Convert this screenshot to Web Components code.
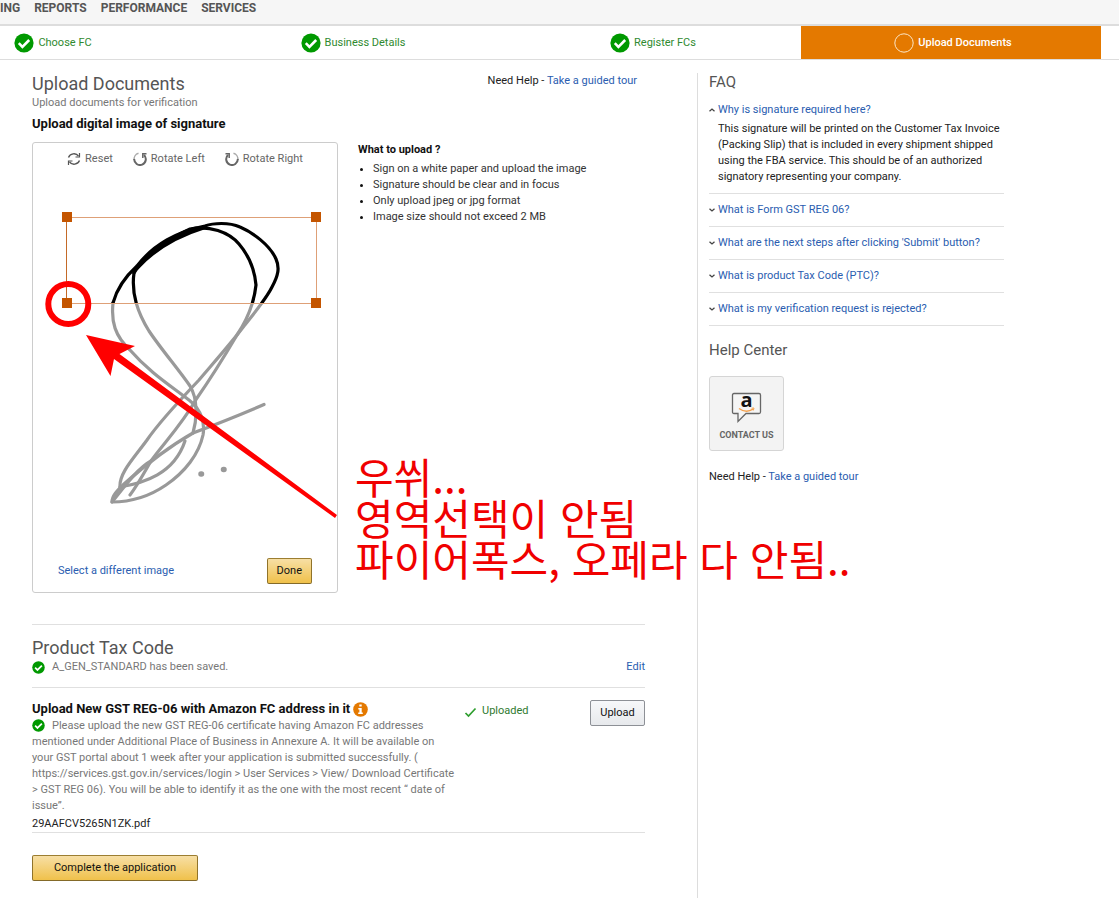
<!DOCTYPE html>
<html lang="en">
<head>
<meta charset="utf-8">
<title>Upload Documents</title>
<style>
body{margin:0;background:#fff;color:#222;font:11px/16px Roboto,"Liberation Sans",sans-serif;overflow-x:hidden}
</style>
</head>
<body>
<upload-page></upload-page>
<script>
const CHECK = size => `<svg width="${size}" height="${size}" viewBox="0 0 20 20" aria-hidden="true"><circle cx="10" cy="10" r="9.6" fill="#090"/><path d="M4.800 10.200l3.600 3.600L15.200 7" fill="none" stroke="#fff" stroke-width="2.600"/></svg>`;
const LINK = 'a{color:#2a5db0;text-decoration:none}a:hover{text-decoration:underline}';
const define = (name, html) => customElements.define(name, class extends HTMLElement {
  constructor() {
    super();
    const t = document.createElement('template');
    t.innerHTML = typeof html === 'function' ? html(this) : html;
    this.attachShadow({mode: 'open'}).append(t.content);
  }
});

define('site-nav', `<style>
:host{display:block;background:#f6f6f6;border-bottom:2px solid #ddd}
nav{display:flex;gap:14px;height:24px;line-height:16px;font-size:12px;font-weight:700}
a{color:#555;text-decoration:none}
</style><nav aria-label="Main"><a href="#">ING</a><a href="#">REPORTS</a><a href="#">PERFORMANCE</a><a href="#">SERVICES</a></nav>`);

define('step-item', el => `<style>
:host{display:flex;box-sizing:border-box;align-items:center;justify-content:center;gap:4px;height:33px;padding:1px 0 0 4px;color:#2f8a2f}
:host([current]){background:#e47900;color:#fff;font-weight:500}
svg{display:block}
</style>${el.hasAttribute('current')
  ? '<svg width="20" height="20" viewBox="0 0 20 20" aria-hidden="true"><circle cx="10" cy="10" r="9.2" fill="none" stroke="#fbe6c8"/></svg>'
  : CHECK(20)}<slot></slot>`);

define('step-bar', `<style>
:host{display:block;border-bottom:1px solid #ddd}
div{display:grid;grid-template-columns:repeat(4,1fr);margin:0 18px 0 -99px}
</style><div><step-item>Choose FC</step-item><step-item>Business Details</step-item><step-item>Register FCs</step-item><step-item current>Upload Documents</step-item></div>`);

define('guided-tour', `<style>:host{display:block}${LINK}</style>Need Help - <a href="#">Take a guided tour</a>`);

define('ui-button', `<style>
:host{display:inline-block}
button{display:block;width:100%;height:26px;padding:0 9px;border:1px solid #8d9096;border-radius:2px;background:linear-gradient(#f7f8fa,#e7e9ec);color:#111;font:11px/16px Roboto,"Liberation Sans",sans-serif;cursor:pointer}
:host([primary]) button{border-color:#9c7e31 #90732a #846a29;background:linear-gradient(#f7dfa5,#f0c14b)}
</style><button type="button"><slot></slot></button>`);

define('tool-button', `<style>
:host{display:block}
button{display:flex;align-items:center;gap:4px;padding:0;border:0;background:none;color:#666;font:inherit;cursor:pointer}
</style><button type="button"><slot name="icon"></slot><slot></slot></button>`);

const SIGNATURE = `
<path d="M113 303C117 288 126 276 137 266C153 245 178 231 205 226C213 223 229 222 240 227C252 232 270 245 276 259C280 268 278 276 272 287C266 299 256 311 244 326C232 342 216 360 199 380C179 401 160 421 147 440C134 458 119 473 120 487"/>
<path d="M134 273C144 256 168 239 190 229C209 225 229 232 239 244C251 258 255 274 256 285C254 304 247 320 237 335C224 357 211 378 197 398C181 426 163 444 151 461C144 473 137 486 130 495"/>
<path d="M134 273C131 294 139 315 149 331C161 349 179 370 190 386C198 399 197 419 193 433"/>
<path d="M113 303C111 322 115 336 130 350C149 372 171 386 189 400C202 410 205 424 203 435C199 454 185 472 166 485C150 496 130 502 112 502C112 495 119 489 124 484C142 468 165 449 193 433C217 424 242 414 264 404.500"/>
<path d="M120 487C144 483 174 474 185 441"/><path d="M112 502C124 487 138 468 151 461"/>`;

define('signature-cropper', `<style>
:host{display:flex;flex-direction:column;width:304px;border:1px solid #ccc;border-radius:3px;padding:8px 0 8px}
.tools{display:flex;justify-content:center;gap:20px}
.stage{display:block;width:100%;margin-top:9px}
.foot{display:flex;align-items:center;justify-content:space-between;margin-top:28px;padding:0 25px}
${LINK}
</style>
<div class="tools">
<tool-button><svg slot="icon" width="14" height="14" viewBox="0 0 14 14" fill="none" stroke="#555" stroke-width="1.400" aria-hidden="true"><path d="M1.500 5.500C3 1.300 9 .500 11.500 4.200M12.500 8.500C11 12.700 5 13.500 2.500 9.800"/><path d="M12.500 1v4h-4M1.500 13V9h4" stroke-width="1.200"/></svg>Reset</tool-button>
<tool-button><svg slot="icon" width="14" height="14" viewBox="0 0 14 14" fill="none" stroke="#666" stroke-width="2" aria-hidden="true"><path d="M5.500 1.300A6 6 0 0 0 1.200 8" stroke="#aaa" stroke-width="1.500"/><path d="M1.200 7A5.800 5.800 0 1 0 11 3"/><path d="M9.800 6V1.800H13.500" stroke-width="1.500"/></svg>Rotate Left</tool-button>
<tool-button><svg slot="icon" width="14" height="14" viewBox="0 0 14 14" fill="none" stroke="#666" stroke-width="2" aria-hidden="true"><path d="M8.500 1.300A6 6 0 0 1 12.800 8" stroke="#aaa" stroke-width="1.500"/><path d="M12.800 7A5.800 5.800 0 1 1 3 3"/><path d="M4.200 6V1.800H.500" stroke-width="1.500"/></svg>Rotate Right</tool-button>
</div>
<svg class="stage" viewBox="33 176 304 354" role="img" aria-label="Signature with crop area">
<defs><clipPath id="in"><path d="M67 217H316V303H67z"/></clipPath><clipPath id="out"><path d="M33 303H337V530H33z"/></clipPath></defs>
<g fill="none" stroke-width="3.200" stroke-linecap="round" stroke-linejoin="round">
<g stroke="#999" clip-path="url(#out)">${SIGNATURE}<path d="M201 474h.5M223.500 469.500h.5" stroke-width="5.500"/></g>
<g stroke="#000" clip-path="url(#in)">${SIGNATURE}<path d="M137 268C155 248 179 235 205 227" stroke-width="4"/></g>
</g>
<path d="M66.500 217.500H316.500V303.500H66.500z" fill="none" stroke="#dea077"/><path d="M66.500 217V303" stroke="#c46a28"/>
<path d="M62 212h10v10H62zM311 212h10v10h-10zM62 298h10v10H62zM311 298h10v10h-10z" fill="#c45500"/>
</svg>
<div class="foot"><a href="#">Select a different image</a><ui-button primary>Done</ui-button></div>`);

define('upload-hints', `<style>
:host{display:block}
h3{margin:0 0 3px;font-size:11px;line-height:16px;color:#111}
ul{margin:0;padding-left:15px;color:#333}
li::marker{color:#111}
</style><h3>What to upload ?</h3><ul><li>Sign on a white paper and upload the image</li><li>Signature should be clear and in focus</li><li>Only upload jpeg or jpg format</li><li>Image size should not exceed 2 MB</li></ul>`);

define('faq-item', el => `<style>
:host{display:block;border-bottom:1px solid #e0e0e0;padding:8px 0}
summary{display:flex;align-items:center;gap:3px;color:#2a5db0;cursor:pointer;list-style:none}
details[open] svg{transform:rotate(180deg)}
p{margin:3px 0 0 9px;color:#222}
</style><details ${el.hasAttribute('expanded') ? 'open' : ''}><summary><svg width="6" height="6" viewBox="0 0 6 6" aria-hidden="true"><path d="M.500 1.800L3 4L5.500 1.800" fill="none" stroke="#444" stroke-width="1.300"/></svg><slot name="question"></slot></summary><p><slot></slot></p></details>`);

define('help-aside', `<style>
:host{display:block;border-left:1px solid #ddd;padding:0 115px 0 11px}
h2{margin:0;font-size:15px;line-height:18px;font-weight:400;color:#555}
.faq{margin-top:3px}
.center{margin-top:15px}
.contact{display:flex;flex-direction:column;align-items:center;width:75px;height:75px;margin:17px 0 18px;padding:14px 0 0;border:1px solid #d5d5d5;border-radius:3px;background:#f3f3f3;color:#666;font:700 9px/16px Roboto,"Liberation Sans",sans-serif;cursor:pointer}
.contact svg{margin-bottom:4px;flex:none;overflow:visible}
</style>
<h2>FAQ</h2>
<div class="faq">
<faq-item expanded><span slot="question">Why is signature required here?</span>This signature will be printed on the Customer Tax Invoice (Packing Slip) that is included in every shipment shipped using the FBA service. This should be of an authorized signatory representing your company.</faq-item>
<faq-item><span slot="question">What is Form GST REG 06?</span></faq-item>
<faq-item><span slot="question">What are the next steps after clicking 'Submit' button?</span></faq-item>
<faq-item><span slot="question">What is product Tax Code (PTC)?</span></faq-item>
<faq-item><span slot="question">What is my verification request is rejected?</span></faq-item>
</div>
<h2 class="center">Help Center</h2>
<button class="contact" type="button"><svg width="30" height="32" viewBox="0 0 30 32" aria-hidden="true"><path d="M2 2.500H27Q28.500 2.500 28.500 4V21Q28.500 22.500 27 22.500H14L6 30.500V22.500H2Q.500 22.500 .500 21V4Q.500 2.500 2 2.500z" fill="#f5f5f5" stroke="#666" stroke-width="1.300"/><text x="14.500" y="16" text-anchor="middle" font-family="Open Sans" font-weight="700" font-size="20" fill="#111">a</text><path d="M7 17.500Q14 22.500 21 18.200" fill="none" stroke="#f3a04c" stroke-width="1.500"/><path d="M19.500 17.200l2.500-.2-.7 2.500" fill="none" stroke="#f3a04c"/></svg>CONTACT US</button>
<guided-tour></guided-tour>`);

define('tax-code', `<style>
:host{display:block;border-top:1px solid #e0e0e0;border-bottom:1px solid #e0e0e0;margin-top:31px;padding:12px 0}
h2{margin:0;font-size:18px;line-height:22px;font-weight:400;color:#555}
div{display:flex;align-items:center;gap:7px;color:#777}
a{margin-left:auto}
${LINK}
</style><h2>Product Tax Code</h2><div>${CHECK(13)}<span>A_GEN_STANDARD has been saved.</span><a href="#">Edit</a></div>`);

define('certificate-upload', `<style>
:host{display:grid;grid-template-columns:minmax(0,1fr) 126px 55px;align-items:start;border-bottom:1px solid #e0e0e0;padding-top:12px}
h3{display:flex;align-items:center;gap:3px;margin:0;font-size:13px;line-height:18px;color:#111}
p{margin:0;padding-right:8px;color:#777}
p svg{vertical-align:-3px;margin-right:7px}
.file{margin-top:2px;color:#222}
.state{display:flex;align-items:center;gap:5px;margin-top:3px;color:#2f7a2f}
</style>
<div><h3>Upload New GST REG-06 with Amazon FC address in it <svg width="15" height="15" viewBox="0 0 15 15" role="img" aria-label="Information"><circle cx="7.500" cy="7.500" r="7.300" fill="#e47900"/><path d="M6.300 2.500h2.400v2H6.300zM5.300 6h3.400v4.600h1.100v1.400H5.200v-1.400h1.200V7.400H5.300z" fill="#fff"/></svg></h3>
<p>${CHECK(13)}Please upload the new GST REG-06 certificate having Amazon FC addresses mentioned under Additional Place of Business in Annexure A. It will be available on your GST portal about 1 week after your application is submitted successfully. ( https://services.gst.gov.in/services/login &gt; User Services &gt; View/ Download Certificate &gt; GST REG 06). You will be able to identify it as the one with the most recent “ date of issue”.</p>
<div class="file">29AAFCV5265N1ZK.pdf</div></div>
<div class="state"><svg width="13" height="13" viewBox="0 0 13 13" aria-hidden="true"><path d="M1.500 8L4.500 11L11.500 3.500" fill="none" stroke="#2e9e2e" stroke-width="1.700"/></svg>Uploaded</div>
<ui-button>Upload</ui-button>`);

define('red-note', `<style>
:host{position:absolute;left:0;top:0;pointer-events:none;color:#f00000}
svg{position:absolute;left:0;top:0}
p{position:absolute;left:355px;top:455px;margin:0;white-space:nowrap;font:42px/41px "Noto Sans CJK KR",sans-serif}
</style>
<svg width="345" height="530" viewBox="0 0 345 530" aria-hidden="true"><circle cx="68.300" cy="304" r="20" fill="none" stroke="#f00" stroke-width="6"/><path d="M86 335L135 346L119.500 354L337 515L335 518L114 359L110.500 376z" fill="#f00"/></svg>
<p lang="ko">우쒸...<br>영역선택이 안됨<br>파이어폭스, 오페라 다 안됨..</p>`);

define('upload-page', `<style>
:host{display:block;position:relative}
.body{display:grid;grid-template-columns:minmax(0,697fr) minmax(0,422fr);padding:13px 0 5px}
main{padding:0 52px 17px 32px}
.title{display:flex;justify-content:space-between;padding-right:8px}
h1{margin:0;font-size:18px;line-height:22px;font-weight:400;color:#555}
.sub{margin:0;color:#777}
h2{margin:4px 0 9px;font-size:13px;line-height:18px;color:#111}
.sign{display:flex;gap:20px}
.done{margin-top:22px;width:166px}
</style>
<site-nav></site-nav><step-bar></step-bar>
<div class="body"><main>
<div class="title"><h1>Upload Documents</h1><guided-tour></guided-tour></div>
<p class="sub">Upload documents for verification</p>
<h2>Upload digital image of signature</h2>
<div class="sign"><signature-cropper></signature-cropper><upload-hints></upload-hints></div>
<tax-code></tax-code><certificate-upload></certificate-upload>
<ui-button class="done" primary>Complete the application</ui-button>
</main><help-aside></help-aside></div>
<red-note></red-note>`);
</script>
</body>
</html>
